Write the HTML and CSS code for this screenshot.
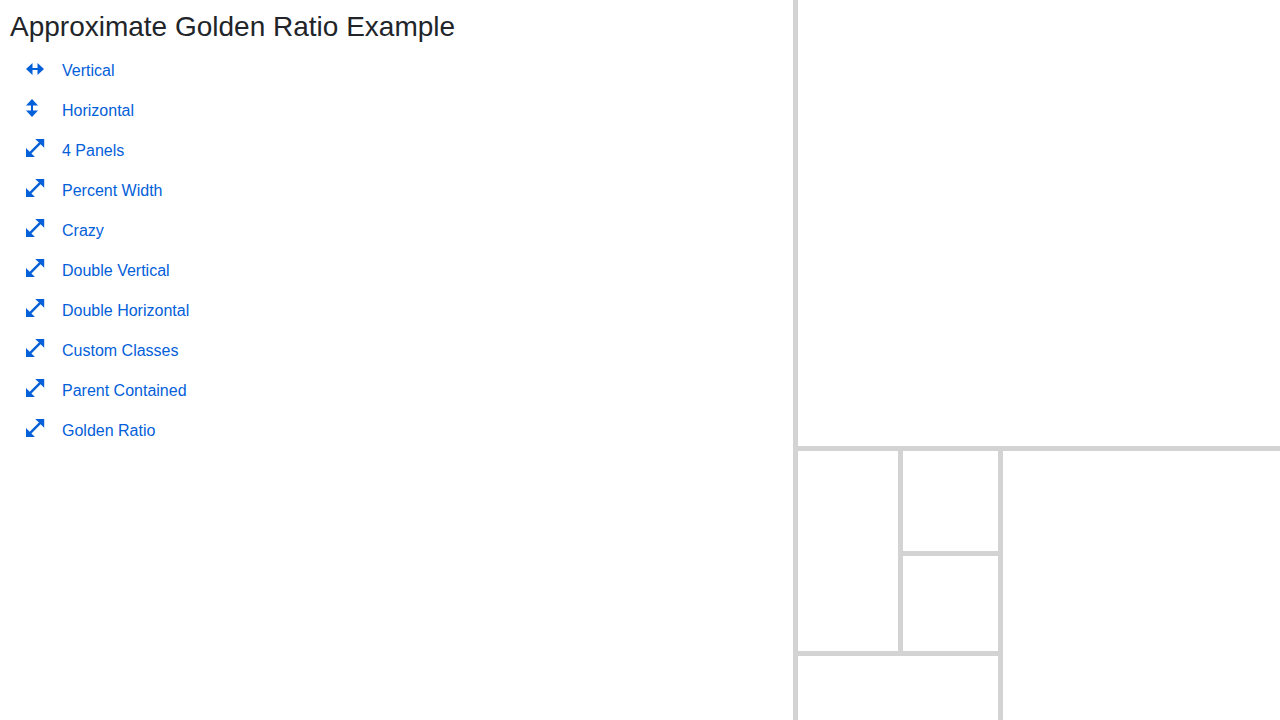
FILE: index.html
```html
<!DOCTYPE html>
<html lang="en">
<head>
<meta charset="utf-8">
<title>Approximate Golden Ratio Example</title>
<link rel="stylesheet" href="styles.css">
</head>
<body>
<svg class="sprite" aria-hidden="true">
  <symbol id="resize-both" viewBox="0 0 18 18"><path d="M9.200 0h9v8.800l-3.600-3.600L5.400 14.400 9 18H0V9l3.700 3.700L12.900 3.600z"/></symbol>
  <symbol id="resize-width" viewBox="0 0 18 18"><path d="M0 10 6.500 4v5h5V4l6.500 6-6.500 6v-5h-5v5z"/></symbol>
  <symbol id="resize-height" viewBox="0 0 18 18"><path d="M6 0l6 6.500H7v5h5L6 18l-6-6.500h5v-5H0z"/></symbol>
</svg>
<div class="row fill">
  <main class="panel">
    <h1 class="title">Approximate Golden Ratio Example</h1>
    <nav class="nav">
      <a class="link" href="#vertical"><svg class="icon"><use href="#resize-width"/></svg>Vertical</a>
      <a class="link" href="#horizontal"><svg class="icon"><use href="#resize-height"/></svg>Horizontal</a>
      <a class="link" href="#panels"><svg class="icon"><use href="#resize-both"/></svg>4 Panels</a>
      <a class="link" href="#percent"><svg class="icon"><use href="#resize-both"/></svg>Percent Width</a>
      <a class="link" href="#crazy"><svg class="icon"><use href="#resize-both"/></svg>Crazy</a>
      <a class="link" href="#double-vertical"><svg class="icon"><use href="#resize-both"/></svg>Double Vertical</a>
      <a class="link" href="#double-horizontal"><svg class="icon"><use href="#resize-both"/></svg>Double Horizontal</a>
      <a class="link" href="#classes"><svg class="icon"><use href="#resize-both"/></svg>Custom Classes</a>
      <a class="link" href="#contained"><svg class="icon"><use href="#resize-both"/></svg>Parent Contained</a>
      <a class="link" href="#golden"><svg class="icon"><use href="#resize-both"/></svg>Golden Ratio</a>
    </nav>
  </main>
  <div class="divider"></div>
  <div class="column rest">
    <div class="major"></div>
    <div class="divider"></div>
    <div class="row rest">
      <div class="column spiral">
        <div class="row square">
          <div class="half"></div>
          <div class="divider"></div>
          <div class="column rest">
            <div class="half"></div>
            <div class="divider"></div>
            <div class="rest"></div>
          </div>
        </div>
        <div class="divider"></div>
        <div class="rest"></div>
      </div>
      <div class="divider"></div>
      <div class="rest"></div>
    </div>
  </div>
</div>
</body>
</html>
```
FILE: styles.css
```css
* {
  box-sizing: border-box;
}

body {
  margin: 0;
  background: #fff;
  color: #212529;
  font-family: "Liberation Sans", Arial, sans-serif;
  font-size: 16px;
  line-height: 24px;
}

.sprite {
  display: none;
}

.row,
.column {
  display: flex;
}

.column {
  flex-direction: column;
}

.fill {
  height: 100vh;
  overflow: hidden;
}

.major {
  flex: 0 0 62%;
}

.half {
  flex: 0 0 50%;
}

.rest {
  flex: 1;
  min-width: 0;
  min-height: 0;
}

.spiral,
.square {
  flex: 0 0 200px;
}

.divider {
  flex: 0 0 5px;
  background: #d3d3d3;
}

.panel {
  flex: 0 0 calc(62% - 1px);
  padding: 10px;
  overflow: auto;
}

.title {
  margin: 0 0 7px;
  font-size: 28px;
  font-weight: 400;
  line-height: 34px;
}

.nav {
  display: flex;
  flex-direction: column;
}

.link {
  display: flex;
  gap: 18px;
  padding: 8px 16px;
  color: #0460d9;
  text-decoration: none;
}

.icon {
  width: 18px;
  height: 18px;
  overflow: visible;
  fill: currentColor;
}

.sprite symbol {
  overflow: visible;
}
```
